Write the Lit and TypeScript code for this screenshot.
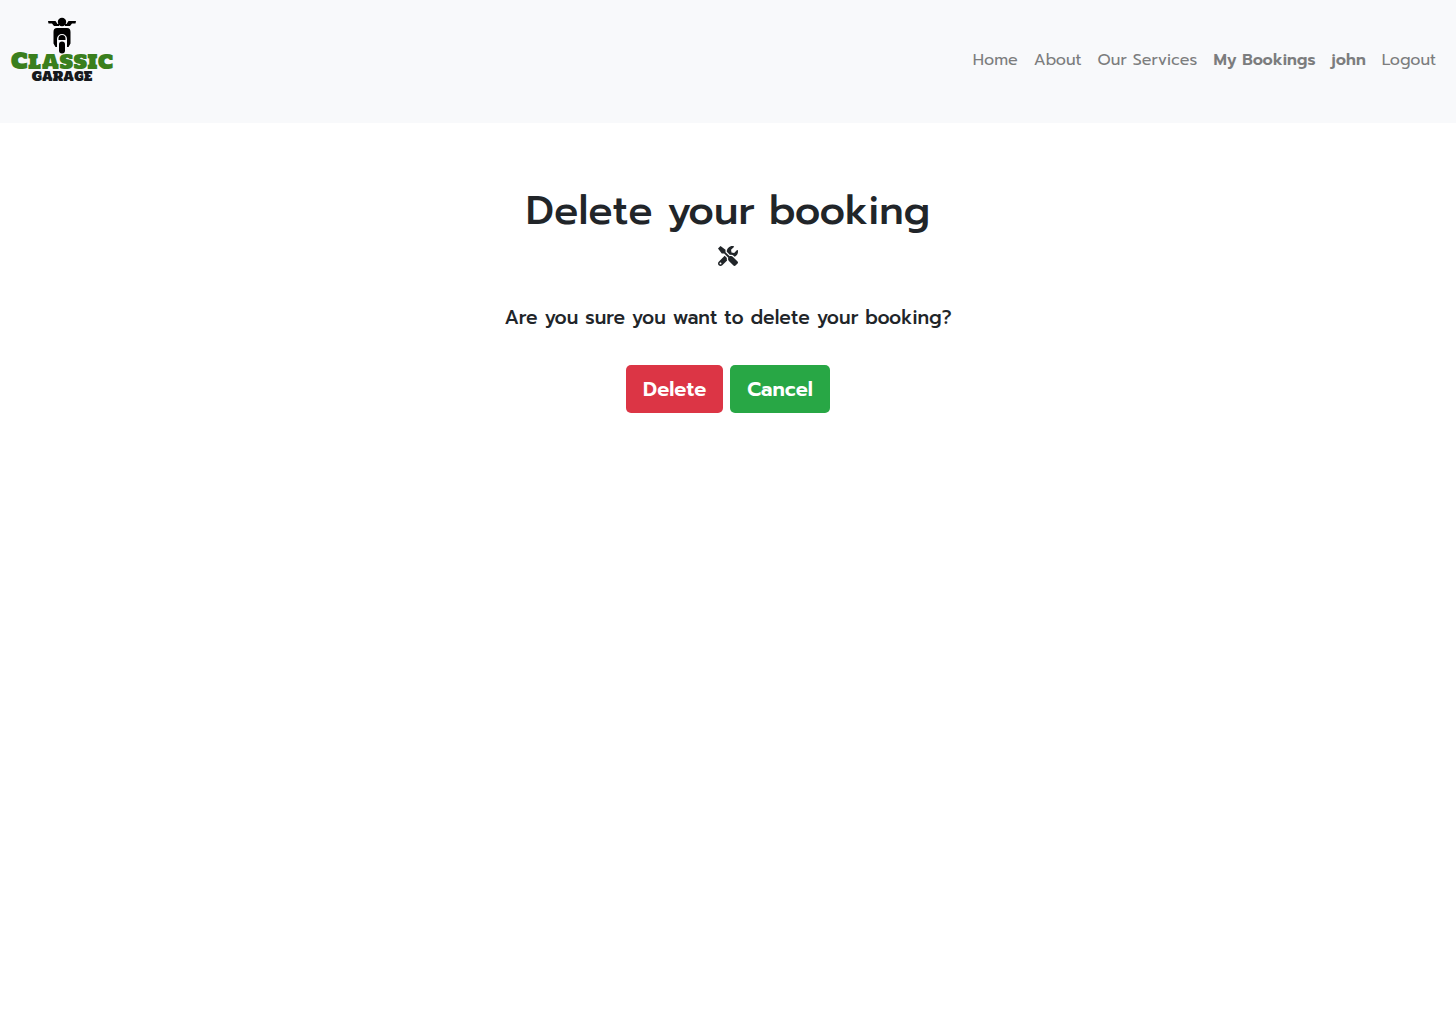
import { LitElement, html, css } from "lit";
import { customElement } from "lit/decorators.js";

const links = [
  { label: "Home", strong: false },
  { label: "About", strong: false },
  { label: "Our Services", strong: false },
  { label: "My Bookings", strong: true },
  { label: "john", strong: true },
  { label: "Logout", strong: false },
];

@customElement("garage-logo")
class GarageLogo extends LitElement {
  static styles = css`
    :host { display: block; }
    .mark { display: block; width: 100px; height: 68px; overflow: visible; }
    .word { font-family: "Holtwood One SC", "Alfa Slab One", "DejaVu Serif", serif; font-weight: 400; text-anchor: middle; }
    .classic { font-size: 20px; fill: #3a7f1d; }
    .cap { font-size: 22px; }
    .garage { font-size: 12px; fill: #16191c; }
    .garage .cap { font-size: 13px; }
  `;
  render() {
    return html`<svg class="mark" viewBox="0 0 100 68" role="img" aria-label="Classic Garage">
      <circle cx="50" cy="6" r="4.2" />
      <path d="M36 5h7.500l2 3h1.500v2h-5l-2-2.500h-3.500zM64 5h-7.500l-2 3h-1.500v2h5l2-2.500h3.500z" />
      <path d="M45 12h10c2.500 0 3.500 1.500 3.500 4v11.500l-2 3.500H55v-8a5 5 0 0 0-10 0v8h-1.500l-2-3.500V16c0-2.500 1-4 3.500-4z" />
      <path d="M46.500 24v-1.500a3.500 3.500 0 0 1 7 0v1.500z" />
      <rect x="47" y="25.500" width="6" height="12" rx="3" />
      <text class="word classic" x="50" y="53"><tspan class="cap">C</tspan>LASSIC</text>
      <text class="word garage" x="50" y="65"><tspan class="cap">G</tspan>ARAGE</text>
    </svg>`;
  }
}

@customElement("app-root")
class AppRoot extends LitElement {
  static styles = css`
    :host {
      display: block;
      min-height: 100vh;
      background: #fff;
      color: #212529;
      font-family: Prompt, Inter, sans-serif;
      font-size: 16px;
      line-height: 24px;
    }
    .bar {
      display: flex;
      justify-content: space-between;
      flex-wrap: wrap;
      min-height: 123px;
      box-sizing: border-box;
      padding: 16px 12px;
      background: #f8f9fb;
    }
    .brand { align-self: flex-start; }
    .links {
      display: flex;
      flex-wrap: wrap;
      align-items: center;
      align-self: center;
      margin: 0;
      padding: 0 0 4px;
      list-style: none;
    }
    .link { display: block; padding: 8px; color: #7c7d7e; text-decoration: none; }
    .strong { font-weight: 600; }
    .content {
      display: flex;
      flex-direction: column;
      align-items: center;
      padding: 64px 16px;
      text-align: center;
    }
    .title { margin: 0; font-size: 40px; font-weight: 500; line-height: 48px; }
    .tools { width: 20px; height: 20px; margin-top: 11px; fill: currentColor; }
    .question { margin: 40px 0 0; font-size: 19px; font-weight: 500; line-height: 24px; }
    .actions { display: flex; gap: 7px; margin-top: 35px; }
    .btn {
      padding: 8px 16px;
      border: 1px solid transparent;
      border-radius: 5px;
      color: #fff;
      font: inherit;
      font-size: 20px;
      font-weight: 600;
      line-height: 30px;
      cursor: pointer;
    }
    .danger { background: #dc3545; }
    .success { background: #28a745; }
  `;
  render() {
    return html`
      <nav class="bar">
        <a class="brand" href="#"><garage-logo></garage-logo></a>
        <ul class="links">
          ${links.map((l) => html`<li><a class="link ${l.strong ? "strong" : ""}" href="#">${l.label}</a></li>`)}
        </ul>
      </nav>
      <main class="content">
        <h1 class="title">Delete your booking</h1>
        <svg class="tools" viewBox="0 0 512 512" aria-hidden="true">
          <path d="M501.1 395.7L384 278.6c-23.1-23.1-57.6-27.6-85.4-13.900L192 158.100V96L64 0 0 64l96 128h62.100l106.600 106.600c-13.600 27.800-9.200 62.300 13.900 85.400l117.100 117.100c14.600 14.600 38.200 14.600 52.700 0l52.700-52.700c14.500-14.600 14.500-38.200 0-52.700zM331.700 225c28.300 0 54.900 11 74.900 31l19.400 19.400c15.800-6.900 30.800-16.500 43.800-29.500 37.100-37.100 49.700-89.300 37.900-136.700-2.200-9-13.500-12.100-20.100-5.500l-74.400 74.400-67.900-11.300L334 98.900l74.400-74.400c6.600-6.600 3.400-17.900-5.700-20.200-47.400-11.700-99.600.9-136.600 37.900-28.500 28.500-41.900 66.100-41.200 103.600l82.100 82.100c8.100-1.900 16.500-2.900 24.700-2.900zm-103.900 82l-56.700-56.700L18.700 402.800c-25 25-25 65.500 0 90.500s65.500 25 90.500 0l123.600-123.600c-7.600-19.900-9.900-41.600-5-62.700zM64 472c-13.200 0-24-10.800-24-24 0-13.300 10.700-24 24-24s24 10.700 24 24c0 13.200-10.700 24-24 24z" />
        </svg>
        <h2 class="question">Are you sure you want to delete your booking?</h2>
        <div class="actions">
          <button class="btn danger" type="button">Delete</button>
          <button class="btn success" type="button">Cancel</button>
        </div>
      </main>
    `;
  }
}
